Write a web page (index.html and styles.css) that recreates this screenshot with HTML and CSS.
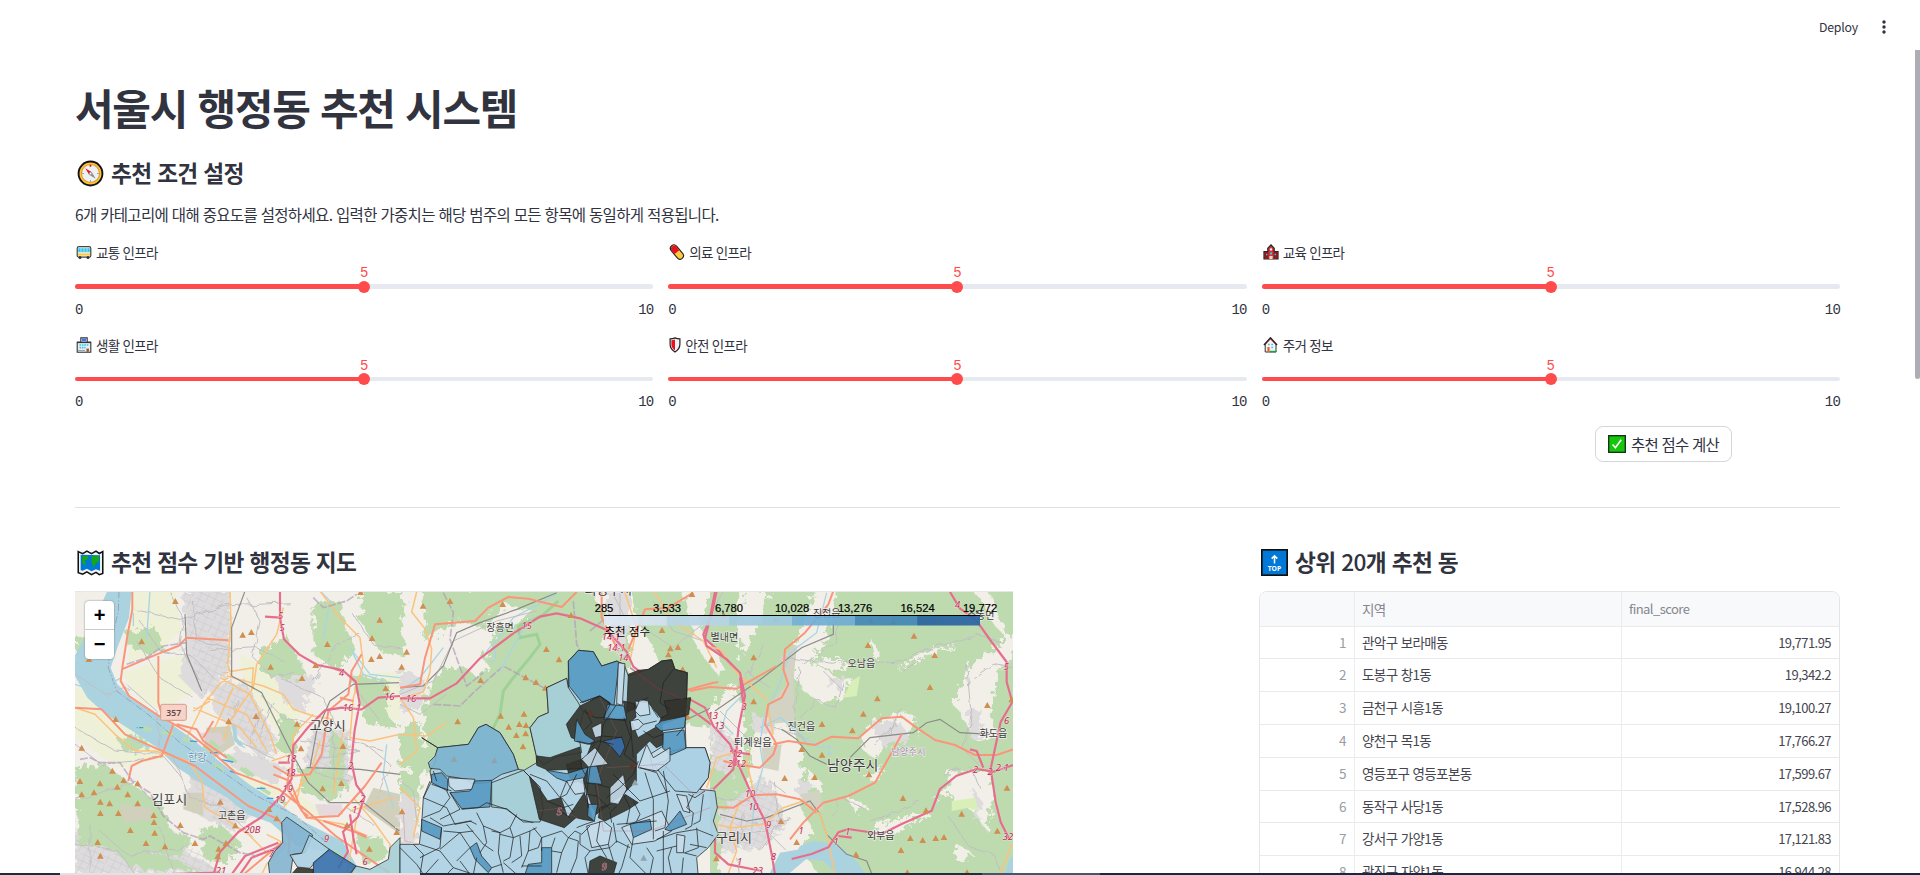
FILE: index.html
```html
<!DOCTYPE html>
<html lang="ko">
<head>
<meta charset="utf-8">
<title>서울시 행정동 추천 시스템</title>
<link rel="stylesheet" href="styles.css">
</head>
<body>
<header class="toolbar">
  <span class="deploy">Deploy</span>
  <svg class="kebab" viewBox="0 0 4 14"><circle cx="2" cy="2" r="1.7"/><circle cx="2" cy="7" r="1.7"/><circle cx="2" cy="12" r="1.7"/></svg>
</header>
<main class="page">
  <h1 class="title">서울시 행정동 추천 시스템</h1>
  <h2 class="section-title">
    <svg class="emoji-lg" viewBox="0 0 26 26"><circle cx="13" cy="13" r="11.5" fill="#ffc23c" stroke="#111" stroke-width="1.8"/><circle cx="13" cy="13" r="8.7" fill="#eef1f4" stroke="#e19a22" stroke-width="1"/><path d="M13 4.8v2M13 19.2v2M4.8 13h2M19.2 13h2" stroke="#9aa" stroke-width="1"/><circle cx="13" cy="5.6" r="1" fill="#e81123"/><path d="M8 8l6.3 3.7-2.6 2.6z" fill="#e81123"/><path d="M18 18l-3.7-6.3-2.6 2.6z" fill="#8b9094"/><circle cx="13" cy="13" r="1.2" fill="#fff" stroke="#777" stroke-width=".5"/></svg>
    <span>추천 조건 설정</span>
  </h2>
  <p class="lead">6개 카테고리에 대해 중요도를 설정하세요. 입력한 가중치는 해당 범주의 모든 항목에 동일하게 적용됩니다.</p>

  <section class="sliders">
    <div class="slider">
      <div class="label"><svg class="emoji" viewBox="0 0 16 16"><rect x="1.2" y="2.6" width="13.6" height="10.6" rx="1.8" fill="#f4f4f4" stroke="#444" stroke-width="1.2"/><rect x="2.2" y="4.2" width="11.6" height="4" fill="#35c5ee"/><path d="M5 4v4M8 4v4M11 4v4" stroke="#cfeef8" stroke-width=".7"/><rect x="2" y="9.4" width="12" height="2.2" fill="#ffc83d"/><circle cx="4" cy="13.4" r="1.5" fill="#333"/><circle cx="12" cy="13.4" r="1.5" fill="#333"/></svg><span>교통 인프라</span></div>
      <div class="value">5</div><div class="track"><i class="fill"></i><i class="thumb"></i></div><div class="range"><span>0</span><span>10</span></div>
    </div>
    <div class="slider">
      <div class="label"><svg class="emoji" viewBox="0 0 16 16"><g transform="rotate(50 8 8)"><rect x="-.2" y="4.6" width="16.4" height="7" rx="3.5" fill="#ffc83d" stroke="#222" stroke-width="1.1"/><path d="M8 5.1H3.6a3 3 0 0 0 0 6H8z" fill="#e81123"/></g></svg><span>의료 인프라</span></div>
      <div class="value">5</div><div class="track"><i class="fill"></i><i class="thumb"></i></div><div class="range"><span>0</span><span>10</span></div>
    </div>
    <div class="slider">
      <div class="label"><svg class="emoji" viewBox="0 0 16 16"><path d="M1 15V7.5h3.8V4.2L8 .9l3.2 3.3v3.3H15V15z" fill="#d13438" stroke="#222" stroke-width="1.2"/><path d="M1.6 7.8h3.8v6.5H1.6zM10.6 7.8h3.8v6.5h-3.8z" fill="#8a1c1c"/><circle cx="8" cy="5.4" r="1.2" fill="#fff"/><path d="M3 9.8h1.4v1.5H3zM11.6 9.8H13v1.5h-1.4zM7 8.5h2v2H7z" fill="#35c5ee"/><path d="M6.4 12h3.2v3H6.4z" fill="#f7d7c4"/></svg><span>교육 인프라</span></div>
      <div class="value">5</div><div class="track"><i class="fill"></i><i class="thumb"></i></div><div class="range"><span>0</span><span>10</span></div>
    </div>
    <div class="slider">
      <div class="label"><svg class="emoji" viewBox="0 0 16 16"><path d="M1.2 15.2V5.4h3.6V.9h6.4v4.5h3.6v9.8z" fill="#e8eef2" stroke="#333" stroke-width="1.1"/><path d="M1 5.4h14" stroke="#333" stroke-width="1.4"/><rect x="6" y="1.7" width="4" height="2.6" fill="#3b78e7"/><path d="M3.5 8h9M3.5 10.6h6" stroke="#35c5ee" stroke-width="1.6" stroke-dasharray="1.6 .8"/><path d="M10.5 11.6h2.4v3.2h-2.4z" fill="#8e562e"/><path d="M2 13.6h7" stroke="#999"/></svg><span>생활 인프라</span></div>
      <div class="value">5</div><div class="track thin"><i class="fill"></i><i class="thumb"></i></div><div class="range"><span>0</span><span>10</span></div>
    </div>
    <div class="slider">
      <div class="label"><svg class="emoji shield" viewBox="0 0 12 16"><path d="M6 .9c1.6.8 3.2 1 4.9 1v5.4c0 3.6-2 6-4.9 7.8-2.900-1.800-4.900-4.200-4.900-7.800V1.900c1.700 0 3.300-.200 4.900-1z" fill="#f2f2f2" stroke="#222" stroke-width="1.200"/><path d="M6 2.500v11c-2.300-1.600-3.600-3.500-3.600-6.200V3.200C3.700 3.200 4.900 3 6 2.500z" fill="#e81123"/></svg><span>안전 인프라</span></div>
      <div class="value">5</div><div class="track thin"><i class="fill"></i><i class="thumb"></i></div><div class="range"><span>0</span><span>10</span></div>
    </div>
    <div class="slider">
      <div class="label"><svg class="emoji" viewBox="0 0 16 16"><path d="M2.200 15V7L7.500 1.200 13 7v8z" fill="#f4f4f4" stroke="#333" stroke-width="1"/><path d="M1 8l6.500-7L14 8" fill="none" stroke="#222" stroke-width="1.600"/><path d="M2.800 7l4.700-5 4.700 5" fill="none" stroke="#d13438" stroke-width=".700"/><path d="M4.400 10h2.200v4.600H4.400z" fill="#f05a24"/><path d="M5 7.500h1.700M8.300 7.500H10M8.300 10.500H10" stroke="#35c5ee" stroke-width="1.700"/><path d="M7 14.500h6.500" stroke="#16a34a" stroke-width="1.400"/></svg><span>주거 정보</span></div>
      <div class="value">5</div><div class="track thin"><i class="fill"></i><i class="thumb"></i></div><div class="range"><span>0</span><span>10</span></div>
    </div>
  </section>

  <div class="actions">
    <button class="calc"><svg class="check" viewBox="0 0 18 18"><rect x=".7" y=".7" width="16.600" height="16.600" fill="#16c60c" stroke="#17351a" stroke-width="1.400"/><path d="M4.600 9.500l2.800 3.200 5.800-8" fill="none" stroke="#fff" stroke-width="1.600"/></svg><span>추천 점수 계산</span></button>
  </div>
  <hr class="divider">

  <section class="results">
    <div class="map-col">
      <h2 class="section-title">
        <svg class="emoji-lg" viewBox="0 0 26 26"><path d="M1.200 2.500l4.300 2 4-2.500 4.500 2.500L18.300 2l3.200 2.300 3.300-1.800v21l-3.300 1.200-3.200-2.200-4.300 2.200L9.500 22l-4 2.300-4.300-1.500z" fill="#f5f5f5" stroke="#111" stroke-width="1.500"/><path d="M3.500 5.500l18.700.5V21l-4-1.500-4.200 2L9.500 19l-4 2-2-.5z" fill="#0078d7"/><path d="M5 7l6-.5-1 3.500-2.500 1 1 3-1.500 2-2-3zM14 7l7-.5.5 4.500-2 3-1-2-1.500 5-2-1-1-4z" fill="#16a815"/></svg>
        <span>추천 점수 기반 행정동 지도</span>
      </h2>
      <div class="map">
        <svg class="map-canvas" viewBox="75 591 938 282">
          <defs>
            <filter id="ragged" x="-5%" y="-5%" width="110%" height="110%"><feTurbulence type="fractalNoise" baseFrequency=".05" numOctaves="3" seed="4"/><feDisplacementMap in="SourceGraphic" scale="46"/></filter>
            <filter id="wobble"><feTurbulence type="fractalNoise" baseFrequency=".03" numOctaves="2" seed="8"/><feDisplacementMap in="SourceGraphic" scale="20"/></filter>
            <path id="peak" d="M-10 9L0-9 10 9z"/>
            <pattern id="blocks" width="44" height="40" patternUnits="userSpaceOnUse" patternTransform="rotate(24)"><path d="M0 10h44M0 30h30M12 0v40M34 0v30" fill="none" stroke="#c9c6ca" stroke-width="1.600"/></pattern>
            <linearGradient id="bar"><stop offset="0" stop-color="#dfeaf5"/><stop offset=".166" stop-color="#d2e1f0"/><stop offset=".167" stop-color="#b9d5e9"/><stop offset=".333" stop-color="#b5d3e6"/><stop offset=".334" stop-color="#a0cbdf"/><stop offset=".5" stop-color="#9bc8de"/><stop offset=".501" stop-color="#74b0d8"/><stop offset=".667" stop-color="#6dabd2"/><stop offset=".668" stop-color="#4488b8"/><stop offset=".833" stop-color="#4286b5"/><stop offset=".834" stop-color="#28629e"/><stop offset="1" stop-color="#2b65a3"/></linearGradient>
          </defs>
          <rect x="75" y="591" width="938" height="282" fill="#f2efe9"/>

          <!-- west: Goyang and Gimpo -->
          <g transform="translate(60 540) scale(.33333)">
            <g class="farm"><path d="M215 150h130l20 120-70 60-90 40zM185 395l200-60 40 110-120 60-60-20zM45 440l90 20 180 110 60 70-200 40-130-90zM540 340l120 60 70 110-60 90-120-180zM480 650l160 60 40 60-80 20zM890 400l130-10v150l-120-40zM700 750l80 50 40 30-90-10z"/></g>
            <g class="wash" filter="url(#ragged)"><path d="M370 150h140v240l-90 80-60-60 20-110zM450 430l110-10 90 180-40 60-150-150zM760 560l110 10v160l-90 50-60-60zM390 700l110 20 80 90-60 60-130-60zM45 860l300 50 150 90H45zM640 390l130 20-40 100-60-20zM530 620l150 60-30 50-150-60z"/></g>
            <path class="grid" d="M370 150h140v240l-90 90zM45 840l300 30 160 130H45zM430 420l130 10 110 190-60 50zM750 560h130v170l-90 70zM380 690l120 10 90 110-100 80z"/>
            <g class="forest" filter="url(#ragged)"><path d="M195 275l90-20 30 70-40 15-70-20zM45 280l55 20-5 70-50-20zM600 330l80-50 60 120-60 20-80-30zM760 190l80-10 20 90 30 60-60 60-70-50zM910 150h120v200l-70-20-60-90zM45 680l90-10 80 60 90 60 30 80 60 20-30 60-90-20-60 50-60-60-100-10zM660 520l60 20-20 110-50-30zM170 590l90-5 5 40-70 10zM870 400l120 20-10 90 30 50-90-10zM810 560l50 50-10 90-40-10zM720 680l120 10 30 50-70 40-80-30zM420 870l60-20 70 60-50 60-70-20zM890 880l80 10 10 60-70 20zM200 930l110 10 110 50H250z"/></g>
            <path d="M440 560l70-5 15 55-60 40-35-20zM370 670l55 10 5 30-30 10zM370 755h60v70l-60-20zM180 790l90 10 10 35-90 10zM940 740l80 20v120l-110-80z" fill="#d0d0bd"/>
            <path d="M420 575h60l15 30-40 30zM765 790h80l5 30-70 10z" fill="#dfd0d8" opacity=".7"/>
            <path class="water" d="M142 150h73l-8 80-35 90-20 60 20 50 45 45 95 60 80 55 85 70 90 70 80 50 80 60 120 60 55 95-90-60-100-20-80-70-70-25-60-50-80-45-70-45-60-60-75-50-80-50-55-50-40-70 5-60 45-80z"/>
            <path d="M240 560l100 20 150 60 100 80M450 600l130 105M400 640l120 60M600 740l80 50M820 930l60 50" fill="none" stroke="#b8dcae" stroke-width="11" stroke-dasharray="36 30"/>
            <path d="M230 560h20M390 600l22 2M450 635h25M480 655l40 8M590 742h26M620 772h20M510 690l30 10" stroke="#3f9df0" stroke-width="4"/>
            <path d="M177 150l-2 60-25 110-5 60 25 70 100 75 90 80 90 60 140 100 120 60 90 80" class="border"/>
            <g class="minor" filter="url(#wobble)"><path d="M230 210l130 25 140-40 190-10M240 240l60 90 100 20 60 60M330 150l40 90-10 70 60 110M420 330l170-10 80 40M45 400l90 60 70-20M200 430l90 80 10 110M400 180l10 120 100 20M230 300l70 110 100 60M45 560l120 70 140 10M45 610l80 60 190-20 50 60M340 650l50 120 100 30 90 90M45 780l180-60 50 60M120 870l80 70 180-20M45 910l130 20 50 70M300 860l40 130M90 850v140M560 170l40 70-20 110 60 60 60-20M660 410l130 60 40 90M600 460l70 70 90 20M740 640l30 60 100 20M820 560v180M850 590l120 40M720 600l180 30M770 660l130-30M760 420l80-120 60-20M880 220l60 90 80 10M900 460l60 80M540 600l110 60M640 480l-40 110M540 480l-40 80M610 500l-40 110M930 620l60 50-40 100M860 800l80 50"/></g>
            <path class="stream" d="M270 150l-10 140M870 320l60 80 90 10M880 340l30 60 60 20M780 150l30 30-20 110M45 430l60 20 80-40M250 520l-30 80 50 20M980 610l-10 90 30 100M45 350l80 60M520 550l15 60 20 10M220 215v40"/>
            <path class="water" d="M515 545l14 6 2 40 20 20-10 5-20-18z"/>
            <g class="primary"><path d="M510 150l3 100-10 120 10 35-30 20-50 60-50 100M500 405l110 30 60 25 30 45 60 20 60 10M480 410l90 50 60 120 20 60M440 470l120 50 60 110M400 510l50-30M580 380l-90 15M580 380l-5 70M670 200l-20 80-60 90-10 70-70 100-20 60M400 500l140 60 50 60M520 440l-60 130M45 500l60 20 60 60 60 50h60l100 30 40 60 10 80 70 40 60 40 60 60M780 150l60 80 60 60 10 80-30 100-10 120 60 10 90-20M760 520l-60 60-5 60-60 20M780 600l-30 100-80 100M850 560l-30 200M730 690l-20 90M740 830l110 20 60 30M880 770l60 70 50 70v50M620 880l60 30-60 60-20 40M890 830l-30 170M870 810l130-40"/></g>
            <g class="rail"><path d="M555 150l-40 110v145l90 50 90 180 50 90 65 60h100l120 95M740 680l160 5 120 15M375 220l5 120 45 110"/><path d="M750 680l20-110 40-90 70-50 140-5"/></g>
            <g class="trunk"><path d="M217 150v55l-15 80-15 95-5 40 25 45 90 60 90 50 60 50 80 70 130 50 90 70 80 70 160 110 40 60M185 385l105-45 65-25 25-25 125 8M295 345v140l10 35M340 550l-35 95-60 15-30 15-10 45M45 500l80 5 70 75 100 45 110 50 80 60 80 60 90 40 35 45-5 60M350 550l60 15 20 35 70 50M430 590l30-50M905 340l-30 50-10 70-60 50-20 130-35 60-60 5-50-30M965 665l-50 70-80 90-95 5-60-90 10-60M840 470l40 10M665 905l-60 50-60 50M640 700l50 20 35 90 20 15M790 840l130 45M880 870l40 20"/></g>
            <g class="motor"><path d="M660 150v80l-45-3M660 230l12 65 45 45 55 32 75 15 40 35 12 65-15 80-10 95 15 70 25 35-20 60-45 45 15 60-30 50M1020 465l-65 5-50 35-60-5-50 8-50 50-45 55-5 100-30 50-60 65-70 45-55 60-20 70M665 915l-90 35-35 50M655 905l-100 40-40 55M300 1000l180-5M655 665h35M815 380l30 10M870 820l10 70 10 50"/></g>
            <path d="M60 655l30-5 30 15h60l40 60 50 30 40 70 60 50 60 20 20-10 90 50 50 10M760 170l30 30 70-20 30-20M200 370l60-20 50-35 70-10" class="hills"/>
            <g class="peaks"><use href="#peak" x="346" y="180"/><use href="#peak" x="245" y="301"/><use href="#peak" x="548" y="281"/><use href="#peak" x="574" y="273"/><use href="#peak" x="632" y="377"/><use href="#peak" x="726" y="411"/><use href="#peak" x="767" y="372"/><use href="#peak" x="802" y="309"/><use href="#peak" x="959" y="236"/><use href="#peak" x="936" y="291"/><use href="#peak" x="934" y="354"/><use href="#peak" x="959" y="345"/><use href="#peak" x="977" y="441"/><use href="#peak" x="902" y="153"/><use href="#peak" x="87" y="354"/><use href="#peak" x="167" y="534"/><use href="#peak" x="65" y="620"/><use href="#peak" x="506" y="540"/><use href="#peak" x="588" y="525"/><use href="#peak" x="711" y="548"/><use href="#peak" x="723" y="622"/><use href="#peak" x="849" y="615"/><use href="#peak" x="844" y="726"/><use href="#peak" x="788" y="742"/><use href="#peak" x="157" y="689"/><use href="#peak" x="191" y="717"/><use href="#peak" x="60" y="720"/><use href="#peak" x="120" y="727"/><use href="#peak" x="172" y="737"/><use href="#peak" x="233" y="727"/><use href="#peak" x="65" y="760"/><use href="#peak" x="102" y="754"/><use href="#peak" x="121" y="782"/><use href="#peak" x="149" y="787"/><use href="#peak" x="203" y="760"/><use href="#peak" x="233" y="787"/><use href="#peak" x="121" y="816"/><use href="#peak" x="175" y="816"/><use href="#peak" x="281" y="822"/><use href="#peak" x="282" y="843"/><use href="#peak" x="211" y="867"/><use href="#peak" x="284" y="875"/><use href="#peak" x="361" y="852"/><use href="#peak" x="481" y="782"/><use href="#peak" x="526" y="853"/><use href="#peak" x="627" y="804"/><use href="#peak" x="650" y="832"/><use href="#peak" x="861" y="852"/><use href="#peak" x="928" y="923"/><use href="#peak" x="113" y="903"/><use href="#peak" x="258" y="906"/><use href="#peak" x="315" y="916"/><use href="#peak" x="405" y="906"/><use href="#peak" x="498" y="906"/><use href="#peak" x="476" y="923"/><use href="#peak" x="121" y="944"/><use href="#peak" x="473" y="945"/><use href="#peak" x="1010" y="873"/></g>
            <g class="exits"><text x="662" y="233">5</text><text x="666" y="270">5</text><text x="845" y="405">4</text><text x="988" y="477">16</text><text x="876" y="509">16-1</text><text x="693" y="663">18</text><text x="691" y="705">18</text><text x="872" y="684">2</text><text x="683" y="752">19</text><text x="660" y="787">19</text><text x="908" y="782">2</text><text x="884" y="815">1</text><text x="577" y="877">20B</text><text x="800" y="904">9</text><text x="634" y="947">7</text><text x="915" y="973">6</text><text x="483" y="1000">21</text></g>
            <rect x="302" y="490" width="77" height="48" rx="5" fill="#f5d3c9" stroke="#dd9a86" stroke-width="3"/><text x="341" y="524" class="shieldtxt">357</text>
            <g class="places"><text x="412" y="659" class="river">한강</text><text x="803" y="567" class="city">고양시</text><text x="328" y="789" class="city">김포시</text><text x="515" y="834">고촌읍</text></g>
          </g>

          <!-- centre and north-east: terrain -->
          <g transform="translate(400 580) scale(.33333)">
            <g class="forest" filter="url(#ragged)"><path d="M70 20h620v560H40l-20-60 60-20-10-120 30-110 130-20 50-100-100-30-110 60zM690 20h330v430l-170-20-90-230-50-90zM0 440l60-20 10 130-70 10zM0 570l60 10-10 180-50-10z"/></g>
            <g fill="#f2efe9" filter="url(#ragged)"><path d="M110 160l80 0 80 100-50 20-60-50-70 90-50 20 20-120zM240 160l70-90 90 20-50 40-70 20-20 90zM600 20h90l-20 110-30 80-30-10 10-100-40-50zM850 20h80l-30 120 90 150v40L890 200z"/></g>
            <g class="wash" filter="url(#ragged)"><path d="M610 20h80v120l-30 90-20-60zM0 260l80 40-20 80-60 10zM0 640l50 10v130l-50 10z"/></g>
            <path d="M475 60l-50 45-70 30 5 35 50-10 10 30-30 40-50 60-30 40-10 70-30 60" fill="none" stroke="#91cc8b" stroke-width="9" opacity=".7"/>
            <path class="hills" d="M520 60l10 130 20 40M100 370l80 5 40-40 90-80 130 70M130 35l30 60-10 80 50 140 50-40M570 150l60-50"/>
            <path class="stream" d="M250 230q30-60 35-20t-20 30M0 330l60-40 70-90M300 270l60-110 40-50M280 190l60-80 130-70"/>
            <g class="minor"><path d="M0 340l100-40 60-120 130-60 120-30M0 370l60 30 80-60M660 20v90l-10 100M640 40l50 100M700 120l120 80 100-80 50-90M760 60l60 90 90 30M0 600l40 30 10 90"/></g>
            <path class="rail" d="M0 320l70-5 60-60 40-100 70-30 110-40 120-50M1020 340L830 430"/>
            <g class="primary"><path d="M50 33l-15 60 40 50 20 60-5 70-20 60-70 20M0 350l40 60 10 100-50 40M0 460l80 5 60-40M670 20l40 120-20 100M760 30l60 90 90 60 40 80M0 620l60 60-20 90"/></g>
            <g class="trunk"><path d="M0 320l60-10 15-80 30-100 120-10 40-40 60-32 60 5 100 25 50-50M605 30v80l50 100M880 35l-75 45-70 5-20 50-30 70M850 330l90-25 80-10"/></g>
            <g class="motor"><path d="M0 352h90l80-45 70-75 100-75 80-50 50-10 70 15 80 35 60 65 20 45 80 60 170 125 75 30 30 30 30 70 25 70M945 33l-20 100-10 40 45 40 40 45 20 70"/></g>
            <g class="peaks"><use href="#peak" x="69" y="74"/><use href="#peak" x="150" y="60"/><use href="#peak" x="308" y="69"/><use href="#peak" x="513" y="102"/><use href="#peak" x="20" y="212"/><use href="#peak" x="439" y="204"/><use href="#peak" x="477" y="235"/><use href="#peak" x="5" y="257"/><use href="#peak" x="242" y="297"/><use href="#peak" x="377" y="289"/><use href="#peak" x="408" y="303"/><use href="#peak" x="436" y="320"/><use href="#peak" x="302" y="404"/><use href="#peak" x="372" y="398"/><use href="#peak" x="173" y="421"/><use href="#peak" x="358" y="429"/><use href="#peak" x="326" y="437"/><use href="#peak" x="378" y="432"/><use href="#peak" x="349" y="462"/><use href="#peak" x="377" y="457"/><use href="#peak" x="369" y="496"/><use href="#peak" x="310" y="486"/><use href="#peak" x="786" y="147"/><use href="#peak" x="811" y="202"/><use href="#peak" x="834" y="198"/><use href="#peak" x="805" y="220"/><use href="#peak" x="935" y="236"/><use href="#peak" x="862" y="406"/><use href="#peak" x="6" y="691"/><use href="#peak" x="848" y="265"/><use href="#peak" x="876" y="39"/></g>
          </g>

          <!-- east: Namyangju and Guri -->
          <g transform="translate(690 580) scale(.33333)">
            <path d="M140 20h840v880H60V460l30-190 60-10z" fill="#bedbb0"/>
            <g fill="#f2efe9" filter="url(#ragged)"><path d="M60 380l80-70 30 140-10 90-100 20zM160 20h80l-30 110-50 90-20-100zM380 20h60l-30 150-50 80-40 50-20-20 30-130zM310 260l70-10 80 50 30-10-20 50-70 30-60-40zM190 440l110-10 40 90-10 160 40 70-40 50 70 100-60 40H80l20-220 70-40zM530 430l100-40 50 20-10 40-70 30-50 50-40-30zM790 370l60-130 50-30 80-60 20 40-70 80-30 130 20 60-60 20zM770 580l60-10 70 0 10 80-20 100-40-60-60-20zM560 730l150-40 10 10-120 60-50 10zM480 250l-60 20-50-30 80-10zM910 130l-40-80-30-20 50-10 70 160z"/><path d="M520 590l60-40-20 50zM470 650l60 20-30 30zM620 270l80-60 110-20-110 40zM350 560l50 50-40 20zM730 660l60-60 10 20zM800 790l40 20-10 40-40-20zM560 240l-20-50 10-10 20 50z"/></g>
            <g class="wash" filter="url(#ragged)"><path d="M60 430l80 50-20 100-50-10zM90 690l80-70 70-30 50 140-80 70-120 10zM540 430l90-10 30 60-80 20zM830 400l40-20 10 80-30 20zM420 290l50 0-30 30-40-10zM330 600l40 10-10 40-40-10zM850 620l30 50-30 60zM190 400l60 10v50l-60-10z"/></g>
            <path class="grid" d="M90 700l80-80 70-20 50 140-80 70-120 10zM60 420l80 50v100H60z"/>
            <path d="M270 230l50-40-10 120 5 110-80 10 5-60 50-60zM215 500l60-10-10 80-45-10zM330 640l60-10 10 60-50-10z" fill="#d3d3c3"/>
            <path d="M485 300l25-15-10 60-40 5zM785 660l70-10 10 40-30-10-50 10z" fill="#d9efb8"/>
            <path class="water" d="M330 795l40-15 70 10 60 50 40 60h-80l-60-60-90-10zM270 815l60-10 30 20-60 50-70 20zM960 830h20v60h-40z"/>
            <path class="stream" d="M410 35l-30 120-80 60-30 90-50 110-10 80 10 60-25 90-10 100M130 460l-40-40M210 440l60-30 60 50 60 40 30-5-5 25 20-10M170 330l-60 60-20 70"/>
            <g class="minor" filter="url(#wobble)"><path d="M290 230l140 20 40-10 150 5 60-30 90-25 90-30 80 25M440 120v60l-100 70M330 260l-20 170 40 60M460 300l-20 80-60-20-50 50M400 270l60 60M600 460l30-80M620 430l-70 60M830 250l15 170-30 80 60 60M850 290l60-40 60 10M840 560l30 60M540 720l60-20 90-40M520 680l-70-30-20 60M780 710l60 90 70 20 20 50M100 760l130-10 60 60M140 830l10 60M160 700l-10 90M250 600l20 130-60 80M190 730l110-20M180 270l-50 60M220 430l120 40M60 650l120 10M290 640l-50-40M240 320l-60-40 40-90M700 230l-60 40M760 580l50-20M90 390l80 80-40 40"/></g>
            <g class="rail"><path d="M75 390l130-90 130-100 95-40V130M275 445l45 30 40 50 50 25M480 530l60-60 130-15 40-30 40-10 60 40 90 5M90 700l80 20 60-10 130-50 30 40 20 60 60 60 60 20 20 50"/></g>
            <g class="primary"><path d="M50 195l40 10 50 70 90 80M180 510l-10 30 20 90M230 370l20 90M70 730l60 10 90-10 60-50 60-20 50 40 20 60 30 140M150 660l-30 80 20 70-30 80M965 790l-35 90M50 620l30-90 70-20"/></g>
            <g class="trunk"><path d="M0 330l60-12 80 5 120-68M430 30l-15 40-70 85-60 50-5 60 15 45-20 40-40 20-10 60 35 60-10 30-40 40-70-10-40-10M250 490l45-10 80 12 50-25 80 5 70-60 60-5 40 30 60 40 60 15 60 30 65 0 60-20 60-15M635 460l-80 145-80 40-75 20-60 60-40 50M80 678l50 2 60-38 70-2 70 15 50 40"/></g>
            <g class="motor"><path d="M80 30L65 100l-25 60 10 35 60 40 40 40 15 70-20 100-10 110M150 290l10 80M0 355l45 25 25 55 50 55 25 60 40 90 40 80 20 100 10 60M120 510l60 10M70 625l60-60 5-60M75 770v45l40 35 100 20M780 33l30 50 45 30 50 70 45 60 0 60 17 60-35 60-30 140 15 100 15 60 25 50M970 552l-60 20-50-8-60 20-50 40-25 65-90 40-60 30-100-15-30 10-30 45-50 20-60 15M840 505l20 5 20 50M445 765l40 5"/></g>
            <g class="peaks"><use href="#peak" x="672" y="164"/><use href="#peak" x="534" y="192"/><use href="#peak" x="734" y="222"/><use href="#peak" x="720" y="318"/><use href="#peak" x="562" y="352"/><use href="#peak" x="520" y="398"/><use href="#peak" x="487" y="448"/><use href="#peak" x="396" y="429"/><use href="#peak" x="335" y="504"/><use href="#peak" x="396" y="521"/><use href="#peak" x="284" y="591"/><use href="#peak" x="374" y="588"/><use href="#peak" x="537" y="580"/><use href="#peak" x="639" y="651"/><use href="#peak" x="815" y="698"/><use href="#peak" x="708" y="688"/><use href="#peak" x="661" y="771"/><use href="#peak" x="698" y="777"/><use href="#peak" x="737" y="771"/><use href="#peak" x="762" y="768"/><use href="#peak" x="633" y="807"/><use href="#peak" x="922" y="749"/><use href="#peak" x="951" y="620"/><use href="#peak" x="892" y="372"/><use href="#peak" x="965" y="355"/><use href="#peak" x="191" y="229"/><use href="#peak" x="65" y="235"/><use href="#peak" x="191" y="361"/><use href="#peak" x="273" y="720"/><use href="#peak" x="320" y="783"/><use href="#peak" x="498" y="820"/><use href="#peak" x="79" y="832"/><use href="#peak" x="258" y="115"/><use href="#peak" x="101" y="102"/><use href="#peak" x="542" y="118"/><use href="#peak" x="611" y="122"/><use href="#peak" x="652" y="874"/><use href="#peak" x="831" y="874"/></g>
          </g>

          <!-- Seoul choropleth -->
          <g transform="translate(60 540) scale(.33333)" class="dong">
            <path class="c4" d="M680 828l-15 17 3 60-23 25-20 35 5 45h60l10-70 35-5 23-53z"/>
            <path class="c1" d="M748 882l60 43-48 45-10 12-38-4-22-36 35-5z"/>
            <path class="c6" d="M808 925l80 50-20 25v10H760v-45z"/>
            <path class="cx" d="M712 980l48 5v20h-70z"/>
            <path class="c2" d="M888 975l42 10 55-30 5-35 30-30v120H865z"/>
          </g>
          <g transform="translate(400 580) scale(.33333)" class="dong">
            <path class="c1" d="M65 470l48 30 92-10 30-50 23-10 42 25 40 65 15 45 17 3 38-23-2-25-18-80 25-32 30-13-5-75 60-28 5 28v-80l30-32 45 4 25 43 45-15 22 10 13 35 60-20 40-25 30-4 10 29 37 10-2 70-5 60 3 95h57l15 45-5 45-25 35 45 5 7 50-12 40 15 40-30 40-35 30 5 60H0V790h58l7-60 5-80 25-50-5-30 15-25 8-45z"/>
            <path class="c3" d="M113 500l92-10 30-50 23-10 42 25 40 65 15 45-50 15-40 25-50 3-15-13-60-10-20-20-30-3-5-17 20-20z"/>
            <path class="c5" d="M505 240l15-15 15-17 45 4 25 43 47-15 5 5-15 130-45-30-50 20-40-50z"/>
            <path class="c0" d="M655 245l20 3-8 125-17-5zM555 605l30 5 10 62-30 8zM665 740l120-50 30 60-50 30-70 10zM750 520l40-25 20 30-15 40-35 5z"/>
            <path class="c2" d="M408 520l-18-80 25-32 30-13-5-75 60-28 5 28 30 45 15 30-15 60 10 60-75 12-40 25z"/>
            <path class="c2" d="M275 605l95-37 50 50 10 70-10 35-50 0-50-40-45-5z"/>
            <path class="c1" d="M858 500l57 0 15 45-5 45-35 45-65-5-65-80 40-10 15-30z"/>
            <path class="cx" d="M685 280l30-12 30-3 40-25 30-4 10 29 37 10-2 70-5 60-70 10-40-50-40-5 5 20-30 15z"/>
            <path class="cx" d="M540 375l60-30 30 20v50h50l-10-55 33 8 5 40-14 12 20 50 60-35 10-25 20-10-12-40 80-10-6 50-80 30 5 60-22 10-20-20-40 40v80l-40 40-80 60-15-30-20-60-45-20-10-40 60-20 15-40-60-20-15-40z"/>
            <path class="cx" d="M410 525l40 5 90-32 5 65-100 5-35-15zM388 585l25 30 30 45 40-10 20 60 50-75 20 60 5 25-30-5-20-5-35 30-75-25zM600 680l60-20 15-20 40 25-30 20-70 35-20-10zM570 840l30-15 50 20-10 35h-75z"/>
            <path class="c5" d="M530 415l25 45 30 20-20 10-42-10zM612 415l10-45 50 5 8 40zM765 435l20-15 73-15-5 35-70 10zM790 455l62-8 6 55-45 20-25-20zM440 568l60 10 65-20-15 40-40 8-40-15zM563 555h28l15 55-45-5zM95 580l30-5 18 20v35l-48-25zM150 635l60-5 15-30 50-2-5 80-85 5zM65 715l60 25-5 35-55-25zM690 730l60-15 5 30-55 25zM840 690l20 40-50 20-15-5zM210 800l20-15 15 40 30 35-10 15-40-40zM425 800h30v80h-80l10-30 40-5zM565 670h28l-10 50-20-15z"/>
            <path class="c6" d="M610 480l55-12 10 30-15 30-25-30z"/>
            <path class="c0" d="M720 355l25 5 5 40-30 5-15-15zM690 420l25-5 15 15-15 15-20 5zM575 440l30-15v40l-20 5zM545 535l40-35 40 50-60 8zM500 600l50-10 5 45-30 5-20-30zM630 620l40-40 10 45-25 45-25-5zM740 490l20 40 50-30 0 40-40 30-55-10zM145 590l80 5-10 30-50 5-18-15zM560 735l50-15 25 20-10 50-50 10zM830 640l30 5 10 50-20-5zM830 760l25 5-5 50h-20z"/>
            <path class="lines" d="M540 365l60-20 30 25-20 40-25 0-35-20M600 345l-30 15M555 385l20 40-20 20M650 370l-40 60-10 60-30 70-10 80 5 40M672 410l20 60-20 50M672 520l40 30M690 420l10 110M820 265l-30 40-10 60 30 20M610 410l70 10M605 465l60 5M530 480l45 10 20-10M595 480l45 10M575 500l10-10M730 430l40-10M730 450l30 20 30-10M755 380l20 30M715 540l-15 40-40 40-40 30M640 580l80 80 30-10 60-20M720 560l50 15 30 60M735 575l25 80v120M790 570l15 90-10 80-30 10M880 640l-20 40 20 15-5 40-20 10M865 640l20 10 30-20M770 775l60-20 60-10 50 20M770 810l60-15M890 740l5 60-40 15M815 800l-10 30 10 50M740 800l20 30-10 50M790 750v130M650 730l120-10M700 660l20 40-10 20M640 725l10 60M670 640l20 40-10 50M635 725l-5-30 20-20M90 600l-20 50 70 30 25 50 50-10M140 630l10 20-30 40-50 20M150 635l30 50-60 30M90 710l40 25 80-15 20 10M125 740l-5 60-60 30M60 790l60 20 40 50 60 20M120 805l60-50 40-5M130 750l50 5 30 45-40 40M200 730l50 60 30 20M185 685l50-5 25-15 60 20 40 30 40 10M230 695l20 40 50 20 30-15 20-40M250 735l10 50-20 30M275 750l25 5-5 60 15 60M300 760l40 10 50-20 20-10M330 740l10 30-10 60-20 10M360 765l5 60-30 20M390 750l-5 60 30-10 10-30M385 810l-20 50M365 855h60M400 740l25 30 60-20 20 20 20-20 20 10 25-25M425 770v40M455 800l10-30M455 810l30 5 20-45M485 815l-15 60M505 770l30 10-5 50-20 50M540 760v30l30 20 60-10 20-20 40 20M570 810l-15 20 10 50M530 740l25-10 30-10M600 720l-10 60 30 50M625 790l15 50M685 790l-20 70-10 20M700 770l-10 60 50 50M850 815l40 10M850 830l-5 50M870 790l50 10M910 640l-10 80-20 10M40 790l30 30-10 60M0 800l50 50 20 30M75 880l40-45M160 860l-20 20M180 840l30 40M275 860l30-10M230 830l-10 50M310 845l40 35M95 610l60 20M100 570l10 30M370 568l20 20M390 580l50 20 40 50 20-10 30-60M500 600l-20 50M485 650l35 45M440 660l50 20 30-10M560 640l30 5 40 40M590 610l40 10M480 690l30 20M545 560l10 20M850 440l-20 25M745 350l-25 10"/>
            <path d="M10 700l5 80 45 10M600 350l50 100-60 150 20 150 140 0 180-70M620 560l170-10 90 90 60-20M415 690l60-8 60 30" fill="none" stroke="#b35c65" stroke-width="3" opacity=".35"/>
            <path d="M690 260l80 60 80 35" fill="none" stroke="#7a3344" stroke-width="5" opacity=".6"/>
            <g fill="#8fa3ac" stroke="none"><use href="#peak" x="162" y="534"/><use href="#peak" x="283" y="538"/><use href="#peak" x="705" y="604"/><use href="#peak" x="731" y="830"/></g>
            <g fill="#5b3425" stroke="none"><use href="#peak" x="572" y="396"/><use href="#peak" x="696" y="555"/></g>
          </g>

          <!-- east and north labels -->
          <g transform="translate(690 580) scale(.33333)">
            <g class="exits"><text x="803" y="80">4</text><text x="949" y="267">5</text><text x="950" y="430">6</text><text x="162" y="387">3</text><text x="68" y="413">13</text><text x="88" y="445">13</text><text x="141" y="528">12</text><text x="121" y="559">2</text><text x="152" y="559">12</text><text x="180" y="649">10</text><text x="190" y="687">10</text><text x="236" y="742">9</text><text x="333" y="758">1</text><text x="473" y="762">1</text><text x="438" y="791">1</text><text x="250" y="838">8</text><text x="149" y="852">1</text><text x="203" y="878">23</text><text x="857" y="575">2</text><text x="900" y="582">2</text><text x="937" y="571">2-1</text><text x="954" y="777">32</text></g>
            <g class="places"><text x="103" y="179">별내면</text><text x="410" y="109">진접읍</text><text x="872" y="113">수동면</text><text x="514" y="259">오남읍</text><text x="334" y="447">진건읍</text><text x="188" y="495" class="mid">퇴계원읍</text><text x="910" y="467">화도읍</text><text x="655" y="521" class="station">남양주시</text><text x="488" y="566" class="big">남양주시</text><text x="572" y="773">외부읍</text><text x="132" y="782" class="city">구리시</text></g>
          </g>
          <g transform="translate(400 580) scale(.33333)">
            <g class="exits"><text x="380" y="145">15</text><text x="33" y="363">16</text><text x="633" y="177">14-1</text><text x="649" y="210">14-1</text><text x="670" y="240">14</text><text x="478" y="702" opacity=".7">5</text><text x="613" y="868" opacity=".7">9</text></g>
            <g class="places"><text x="300" y="149">장흥면</text><text x="625" y="40" class="city">의정부시</text></g>
          </g>

          <rect x="604" y="614.500" width="376" height="10" fill="url(#bar)" opacity=".92"/>
          <path d="M604 614.500h376" stroke="#000"/>
          <g class="ticks"><text x="604" y="611">285</text><text x="667" y="611">3,533</text><text x="729" y="611">6,780</text><text x="792" y="611">10,028</text><text x="855" y="611">13,276</text><text x="917.500" y="611">16,524</text><text x="980" y="611">19,772</text></g>
          <text x="604.500" y="635" class="caption">추천 점수</text>
        </svg>
        <div class="zoom"><b>+</b><b>−</b></div>
      </div>
    </div>

    <div class="table-col">
      <h2 class="section-title">
        <svg class="emoji-lg" viewBox="0 0 26 26"><rect x=".8" y=".8" width="24.400" height="24.400" fill="#0078d7" stroke="#111" stroke-width="1.600"/><path d="M13 14V7M10.300 9.300L13 6.500l2.700 2.800" fill="none" stroke="#fff" stroke-width="1.500"/><text x="13" y="21" class="top-text">TOP</text></svg>
        <span>상위 <span class="count">20</span>개 추천 동</span>
      </h2>
      <div class="table">
        <div class="row head"><span></span><span>지역</span><span>final_score</span></div>
        <div class="row"><span>1</span><span>관악구 보라매동</span><span>19,771.95</span></div>
        <div class="row"><span>2</span><span>도봉구 창1동</span><span>19,342.2</span></div>
        <div class="row"><span>3</span><span>금천구 시흥1동</span><span>19,100.27</span></div>
        <div class="row"><span>4</span><span>양천구 목1동</span><span>17,766.27</span></div>
        <div class="row"><span>5</span><span>영등포구 영등포본동</span><span>17,599.67</span></div>
        <div class="row"><span>6</span><span>동작구 사당1동</span><span>17,528.96</span></div>
        <div class="row"><span>7</span><span>강서구 가양1동</span><span>17,121.83</span></div>
        <div class="row"><span>8</span><span>광진구 자양1동</span><span>16,944.28</span></div>
      </div>
    </div>
  </section>
</main>
<div class="scrollbar"></div>
<div class="taskbar"></div>
</body>
</html>
```
FILE: styles.css
```css
* { box-sizing: border-box; }
body { margin: 0; height: 875px; overflow: hidden; position: relative; background: #fff; color: #31333f; font-family: "Noto Sans CJK KR", "Noto Sans", sans-serif; }
.toolbar { height: 60px; padding: 0 34px 6px 0; display: flex; align-items: center; justify-content: flex-end; gap: 24px; font-size: 12.300px; line-height: 20px; letter-spacing: -.2px; }
.kebab { width: 4px; height: 14px; fill: #31333f; }
.page { width: 1765px; margin-left: 75px; }
.title { margin: 0; height: 91px; padding-top: 15px; font-size: 42px; line-height: 64px; font-weight: 700; letter-spacing: -1.300px; }
.section-title { margin: 0; height: 45px; display: flex; align-items: center; gap: 7px; padding: 0 0 1px 2px; font-size: 22.700px; line-height: 36px; font-weight: 600; letter-spacing: -.650px; }
.count { font-weight: 500; }
.emoji-lg { width: 27px; height: 27px; flex: none; }
.lead { margin: 0; height: 40px; padding-top: 6px; font-size: 15.500px; line-height: 24px; letter-spacing: -.670px; white-space: nowrap; }
.sliders { display: grid; grid-template-columns: repeat(3, 1fr); column-gap: 15px; padding-top: 6px; }
.slider { height: 92.500px; }
.label { height: 20px; display: flex; align-items: center; gap: 4px; padding-left: 1px; font-size: 13.500px; line-height: 20px; letter-spacing: -.7px; }
.emoji { width: 16px; height: 16px; flex: none; }
.emoji.shield { width: 12px; }
.value { height: 20px; text-align: center; color: #ff4b4b; font: 14px/22px "Liberation Mono", monospace; }
.track { height: 5px; margin-top: 2px; border-radius: 3px; background: #e6e9f0; position: relative; }
.track.thin { height: 4px; }
.fill { display: block; width: 50%; height: 100%; border-radius: 3px 0 0 3px; background: #ff4b4b; }
.thumb { position: absolute; left: 50%; top: 50%; width: 12px; height: 12px; margin: -6px; border-radius: 50%; background: #ff4b4b; }
.range { display: flex; justify-content: space-between; margin-top: 11px; font: 14px/20px "Liberation Mono", monospace; letter-spacing: -.8px; }
.actions { display: flex; justify-content: flex-end; padding-right: 108px; }
.calc { width: 137px; height: 36px; margin: -1px 0 0; padding: 0; display: flex; align-items: center; justify-content: center; gap: 5px; border: 1px solid #d6d6d9; border-radius: 8px; background: #fff; color: #31333f; font: 15.500px/24px "Noto Sans CJK KR", sans-serif; letter-spacing: -.8px; }
.check { width: 18px; height: 18px; }
.divider { height: 1px; margin: 45px 0 33px; border: 0; background: #dfe0e3; }
.results { display: flex; justify-content: space-between; }
.map-col { width: 938px; }
.table-col { width: 581px; }
.map-col .section-title, .table-col .section-title { height: 50px; padding-bottom: 8px; }
.map { height: 282px; position: relative; border-top: 1px solid #e6e6e6; }
.map-canvas { display: block; width: 938px; height: 282px; }
.zoom { position: absolute; left: 10px; top: 9px; width: 29px; height: 58px; border-radius: 4px; background: #fff; box-shadow: 0 0 2px #777; display: grid; grid-template-rows: 1fr 1fr; }
.zoom b { text-align: center; font: 700 20px/28px "Liberation Sans", sans-serif; color: #000; }
.zoom b:first-child { border-bottom: 1px solid #ccc; }
.farm { fill: #eef1d8; }
.wash { fill: #dddbdc; }
.grid { fill: url(#blocks); }
.forest { fill: #bedbb0; }
.water { fill: #aad3df; }
.stream { fill: none; stroke: #a9d5e2; stroke-width: 4; }
.border { fill: none; stroke: #8a84ab; stroke-width: 2.500; stroke-dasharray: 22 6 4 6; opacity: .75; }
.hills { fill: none; stroke: #b49bb9; stroke-width: 5; stroke-dasharray: 24 5; opacity: .7; }
.minor { fill: none; stroke: #c1bec4; stroke-width: 3; }
.primary { fill: none; stroke: #fbc27b; stroke-width: 4.500; stroke-linejoin: round; }
.rail { fill: none; stroke: #8b8b89; stroke-width: 3.500; }
.trunk { fill: none; stroke: #fb957a; stroke-width: 6; stroke-linejoin: round; }
.motor { fill: none; stroke: #e76d8c; stroke-width: 6.500; stroke-linejoin: round; }
.peaks { fill: #d08e50; }
.exits { font: italic 28px "Noto Sans", sans-serif; fill: #bd2850; text-anchor: middle; stroke: #f5e8e6; stroke-width: 2; paint-order: stroke; }
.shieldtxt { font: 600 26px "Noto Sans", sans-serif; fill: #6b4540; text-anchor: middle; }
.places { font: 30px "Noto Sans CJK KR", sans-serif; fill: #3c3c3c; text-anchor: middle; stroke: #f7f5f1; stroke-width: 4; stroke-opacity: .75; paint-order: stroke; }
.places .mid { font-size: 31px; }
.places .city { font-size: 39px; }
.places .big { font-size: 42px; }
.places .river { font-size: 31px; fill: #5f97c8; }
.places .station { font-size: 28px; fill: #b08abb; }
.dong { stroke: #222; stroke-width: 2.600; stroke-linejoin: round; }
.dong path { fill-opacity: .9; stroke-opacity: .85; }
.dong .lines { fill: none; }
.c0 { fill: #c5dcea; }
.c1 { fill: #abd0e3; }
.c2 { fill: #a5ced5; }
.c3 { fill: #7cb2ce; }
.c4 { fill: #83b4d2; }
.c5 { fill: #5599c2; }
.c6 { fill: #356fac; }
.cx { fill: #32332b; }
.ticks { font: 11.200px "Liberation Sans", sans-serif; text-anchor: middle; fill: #000; stroke: #000; stroke-width: .2; }
.caption { font: 11.500px "Noto Sans CJK KR", sans-serif; }
.top-text { font: 700 6.500px "Noto Sans", sans-serif; fill: #fff; text-anchor: middle; letter-spacing: 0; }
.table { height: 300px; overflow: hidden; border: 1px solid #e4e5e8; border-radius: 8px 8px 0 0; color: #45464f; font-size: 13.500px; letter-spacing: -.6px; }
.row { display: grid; grid-template-columns: 95px 267px 1fr; height: 32.830px; line-height: 31px; border-bottom: 1px solid #e9eaec; }
.row span { padding: 0 8px 0 7px; border-right: 1px solid #ebecee; }
.row span:first-child { text-align: right; color: #9a9ba3; }
.row span:last-child { text-align: right; border-right: 0; font-size: 13px; letter-spacing: -.550px; }
.row.head { height: 34.500px; line-height: 34px; background: #f8f9fb; color: #85868f; }
.row.head span:last-child { text-align: left; }
.scrollbar { position: absolute; right: 0; top: 50px; width: 5px; height: 329px; background: #aeadb3; border-radius: 0 0 3px 3px; }
.taskbar { position: absolute; left: 0; right: 0; bottom: 0; height: 2px; background: linear-gradient(90deg, #1d2f3c 60px, #e2e2e2 60px 420px, #1d2e3d 420px 982px, #46566a 982px 1100px, #1a2742 1100px); }
```
